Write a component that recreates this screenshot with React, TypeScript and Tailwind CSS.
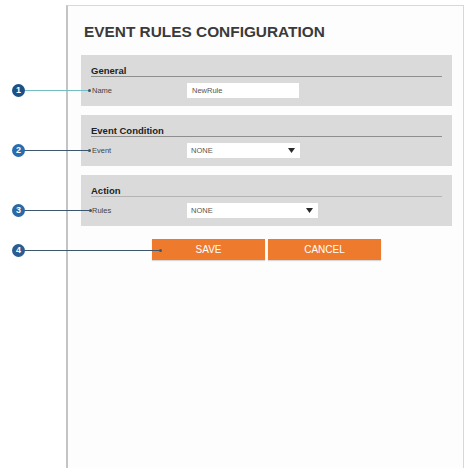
import React from "react";

type Callout = { n: number; y: number; x2: number; circle: string; line: string };

const callouts: Callout[] = [
  { n: 1, y: 90, x2: 90, circle: "bg-[#1d5185]", line: "bg-[#74bcc6]" },
  { n: 2, y: 150, x2: 90, circle: "bg-[#2a6cae]", line: "bg-[#3c5670]" },
  { n: 3, y: 210, x2: 91, circle: "bg-[#2a69a3]", line: "bg-[#3c5670]" },
  { n: 4, y: 250, x2: 161, circle: "bg-[#2b5d90]", line: "bg-[#3c5670]" },
];

function Arrow() {
  return (
    <svg width="7" height="5" viewBox="0 0 7 5" className="block">
      <polygon points="0,0 7,0 3.5,5" fill="#2a2a2a" />
    </svg>
  );
}

function Section({ title, children, faint }: { title: string; children: React.ReactNode; faint?: boolean }) {
  return (
    <div className="bg-[#dadada] px-[10px] pt-[10px] pb-[8px]">
      <div
        className={
          "h-[12px] leading-[11px] text-[9.5px] font-bold text-[#222] border-b " +
          (faint ? "border-[#b4b4b4]" : "border-[#8e8e8e]")
        }
      >
        {title}
      </div>
      <div className="mt-[6px] flex items-center h-[15px]">{children}</div>
    </div>
  );
}

function Label({ text }: { text: string }) {
  return <div className="w-[96px] pl-[1px] text-[7.5px] text-[#444]">{text}</div>;
}

function Select({ width, value }: { width: string; value: string }) {
  return (
    <div className={"h-[15px] bg-white flex items-center justify-between pl-[4px] pr-[5px] " + width}>
      <span className="text-[7.5px] text-[#555]">{value}</span>
      <Arrow />
    </div>
  );
}

export default function App() {
  return (
    <div className="relative w-[465px] h-[468px] bg-white overflow-hidden font-['Liberation_Sans',Arial,sans-serif]">
      <div className="pt-[5px] pl-[66px]">
        <div className="h-[463px] w-[398px] border border-[#d8d8d8] border-l-2 border-l-[#c4c4c4] border-b-0 bg-[#fdfdfd] pl-[13px] pr-[11px] pt-[18px]">
          <h1 className="pl-[3px] h-[16px] leading-[16px] text-[15.4px] font-bold text-[#3a3a3a]">
            EVENT RULES CONFIGURATION
          </h1>
          <div className="mt-[15px] flex flex-col gap-[9px]">
            <Section title="General">
              <Label text="Name" />
              <div className="w-[112px] h-[15px] bg-white flex items-center pl-[5px] text-[7.5px] text-[#555]">
                NewRule
              </div>
            </Section>
            <Section title="Event Condition">
              <Label text="Event" />
              <Select width="w-[113px]" value="NONE" />
            </Section>
            <Section title="Action" faint>
              <Label text="Rules" />
              <Select width="w-[131px]" value="NONE" />
            </Section>
          </div>
          <div className="mt-[13px] flex justify-center gap-[3px]">
            <button className="w-[113px] h-[21px] bg-[#ee7a2e] text-white text-[10px] shadow-[0_1px_1px_rgba(0,0,0,0.15)]">
              SAVE
            </button>
            <button className="w-[113px] h-[21px] bg-[#ee7a2e] text-white text-[10px] shadow-[0_1px_1px_rgba(0,0,0,0.15)]">
              CANCEL
            </button>
          </div>
        </div>
      </div>

      {/* numbered callouts pointing at the form fields */}
      {callouts.map((c) => (
        <React.Fragment key={c.n}>
          <div
            className={"absolute h-px " + c.line}
            style={{ left: 24, top: c.y, width: c.x2 - 24 }}
          />
          <div
            className="absolute w-[3px] h-[3px] rounded-full bg-[#3c5670]"
            style={{ left: c.x2 - 2, top: c.y - 1 }}
          />
          <div
            className={"absolute w-[13px] h-[13px] rounded-full flex items-center justify-center text-white text-[9px] font-bold leading-none " + c.circle}
            style={{ left: 12, top: c.y - 6 }}
          >
            {c.n}
          </div>
        </React.Fragment>
      ))}
    </div>
  );
}
